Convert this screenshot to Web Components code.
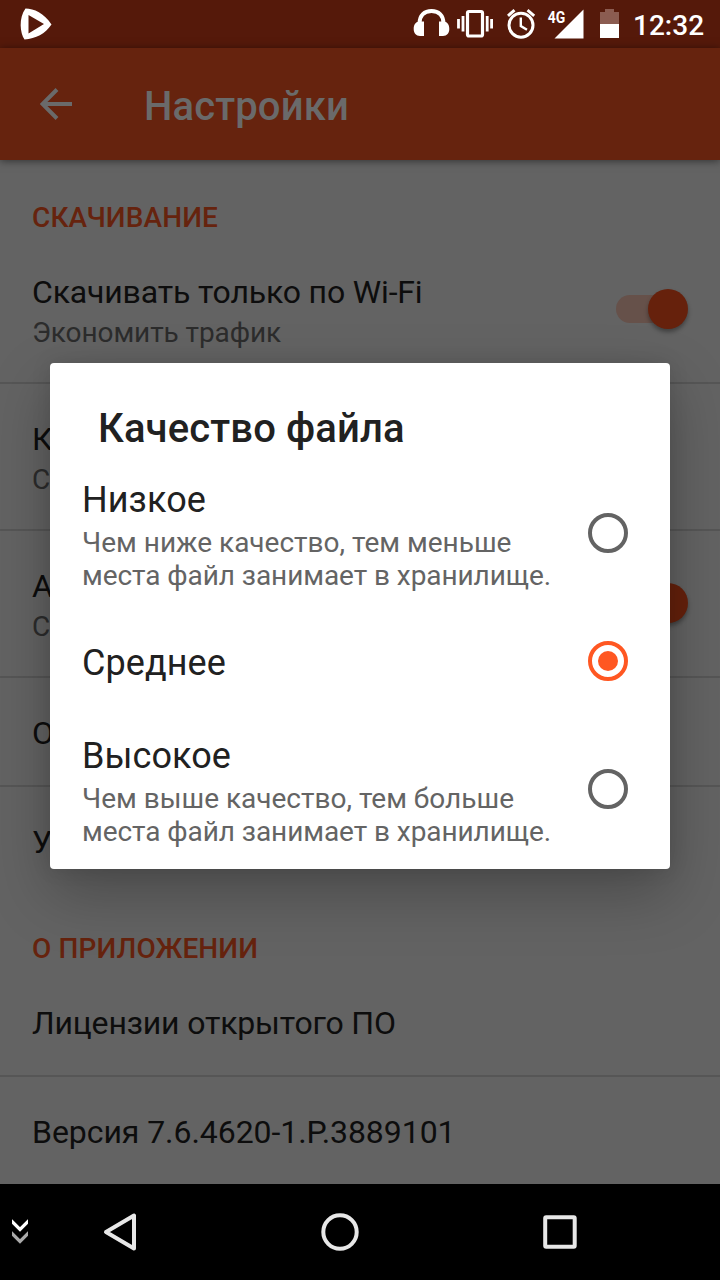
<!DOCTYPE html>
<html lang="ru">
<head>
<meta charset="utf-8">
<title>Настройки</title>
<style>
html,body{margin:0;padding:0}
body{width:720px;height:1280px;overflow:hidden;font-family:Roboto,"Noto Sans",sans-serif}
</style>
</head>
<body>
<settings-screen></settings-screen>
<script>
function define(name, html, setup) {
  const t = document.createElement('template');
  t.innerHTML = html;
  customElements.define(name, class extends HTMLElement {
    constructor() {
      super();
      this.attachShadow({mode: 'open'}).append(t.content.cloneNode(true));
    }
    connectedCallback() { if (setup) setup(this, this.shadowRoot); }
  });
}

define('status-bar', `
<style>
:host{display:block;height:48px;background:#55190a;color:#fff}
.bar{display:flex;height:48px;align-items:center;justify-content:space-between;padding-right:16px}
.right{display:flex;align-items:center}
.gap{width:13px}
svg{display:block}
.time{font-size:28px;font-weight:500;line-height:48px;width:71px;white-space:nowrap;margin-top:3px}
</style>
<div class="bar">
 <svg width="60" height="48"><path fill="#fff" fill-rule="evenodd" d="M25.500 8.500C34 8.500 44 13 51.500 24.500C45 34 36 38.500 24.500 39.500C20 33 18.500 18 25.500 8.500ZM28.500 15V33.500L44 24Z"/></svg>
 <div class="right">
 <svg width="220" height="48" viewBox="400 0 220 48">
  <g fill="none" stroke="#fff">
   <path stroke-width="4" d="M419.500 23.500C419.500 15 424.500 11 431.500 11C438.500 11 443.500 15 443.500 23.500"/>
   <rect x="467.500" y="11.500" width="15" height="24.500" rx="1.500" stroke-width="3.200"/>
   <path stroke-width="2.800" d="M458.500 19V28.500M463 16V31.500M487.200 16V31.500M491.600 19V28.500"/>
   <circle cx="521" cy="25.200" r="12" stroke-width="3"/>
   <path stroke-width="2.400" d="M520.800 17.500V26L527 29.800"/>
   <path stroke-width="3" d="M508 15.800L514.500 10.200M527.500 10.200L534.200 15.800"/>
  </g>
  <path fill="#fff" d="M424 21.500V36H420C416 36 413.700 33 413.700 29C413.700 24 416 21.500 420 21.500ZM439 21.500V36H443C447 36 449.300 33 449.300 29C449.300 24 447 21.500 443 21.500ZM583.500 9.500V38.500H554.500Z"/>
  <text x="547.800" y="23" font-family="Roboto,sans-serif" font-size="17" font-weight="700" fill="#fff" textLength="17.500" lengthAdjust="spacingAndGlyphs">4G</text>
  <path fill="#8b5c51" d="M600 12H605V9H614V12H619V24H600Z"/>
  <path fill="#fff" d="M600 24H619V38H600Z"/>
 </svg>
 <div class="gap"></div>
 <div class="time">12:32</div>
 </div>
</div>`);

define('app-header', `
<style>
:host{display:flex;align-items:center;box-sizing:border-box;height:112px;background:#66230e;color:#6a6a6a;padding-left:40px;box-shadow:0 1px 8px rgba(0,0,0,.5);position:relative;z-index:1}
svg{display:block;margin-right:72px}
.t{font-size:40px;font-weight:500;line-height:48px;padding-top:6px;letter-spacing:.13px}
</style>
<svg width="32" height="32" viewBox="0 0 32 32"><path d="M17 1.500L2.500 16L17 30.500M2.500 16H32" fill="none" stroke="#6a6a6a" stroke-width="4"/></svg>
<div class="t"><slot></slot></div>`);

define('section-title', `
<style>
:host{display:block;box-sizing:border-box;height:77px;padding:41px 32px 0;font-size:28px;line-height:33px;font-weight:500;color:#66230e;white-space:nowrap;letter-spacing:.1px}
</style><slot></slot>`);

define('toggle-switch', `
<style>
:host{display:block;width:72px;height:40px}
svg{display:block;overflow:visible}
circle{filter:drop-shadow(0 3px 2px rgba(0,0,0,.35))}
</style>
<svg width="72" height="40"><rect y="6" width="66" height="28" rx="14" fill="#66514a"/><circle cx="52" cy="20" r="20" fill="#66210c"/></svg>`);

define('setting-row', `
<style>
:host{display:flex;box-sizing:border-box;height:147px;padding:36px 32px 0;justify-content:space-between;border-bottom:2px solid #565656;white-space:nowrap}
:host([single]){height:109px}
:host([last]){border-bottom-color:transparent}
.main{font-size:32px;line-height:38px;color:#0d0d0d;letter-spacing:var(--tracking,-.16px)}
.sub{font-size:28px;line-height:33px;margin-top:5px;color:#2c2c2c;letter-spacing:-.08px}
.end{padding-top:16px}
</style>
<div><div class="main"><slot></slot></div><div class="sub"><slot name="sub"></slot></div></div>
<div class="end"><slot name="end"></slot></div>`);

define('radio-mark', `
<style>:host{display:block;width:40px;height:40px;flex:none}svg{display:block}
.dot{display:none}:host([on]) .dot{display:block}
:host{color:#636363}:host([on]){color:#ff5722}</style>
<svg width="40" height="40"><circle cx="20" cy="20" r="18" fill="none" stroke="currentColor" stroke-width="4"/><circle class="dot" cx="20" cy="20" r="10" fill="currentColor"/></svg>`);

define('radio-option', `
<style>
:host{display:flex;height:128px;align-items:center;justify-content:space-between;padding:0 42px 0 32px;white-space:nowrap}
.name{font-size:36px;line-height:42px;color:#212121;letter-spacing:.08px}
.desc{font-size:28px;line-height:33px;color:#646464}
.text{padding-top:4px}
.desc ::slotted(*){display:block;padding-top:5px;margin-bottom:-1px}
</style>
<div class="text"><div class="name"><slot></slot></div><div class="desc"><slot name="desc"></slot></div></div>
<radio-mark></radio-mark>`, (el, root) => {
  root.querySelector('radio-mark').toggleAttribute('on', el.hasAttribute('checked'));
});

define('choice-dialog', `
<style>
:host{display:block;position:absolute;left:50px;top:363px;width:620px;height:506px;box-sizing:border-box;background:#fff;border-radius:4px;box-shadow:0 24px 60px rgba(0,0,0,.26),0 0 20px rgba(0,0,0,.1);z-index:3}
.title{height:106px;box-sizing:border-box;padding:42px 48px 0;font-size:40px;line-height:47px;font-weight:500;color:#212121;letter-spacing:.13px}
</style>
<div class="title"><slot name="title"></slot></div><slot></slot>`);

define('nav-bar', `
<style>
:host{display:block;height:96px;background:#000;position:relative;z-index:4}
.bar{display:flex;align-items:center;height:96px;padding-left:12px}
svg{display:block}
</style>
<div class="bar">
<svg width="16" height="96" viewBox="12 0 16 96"><g fill="none" stroke-width="3.200"><path d="M11 36.500L20 45.500L29 36.500" stroke="#fff"/><path d="M11 48.500L20 57.500L29 48.500" stroke="#aaa"/></g></svg>
<svg width="292" height="96" viewBox="28 0 292 96"><path d="M134 31.500V64.500L106 48Z" fill="none" stroke="#e8e8e8" stroke-width="4" stroke-linejoin="round"/></svg>
<svg width="220" height="96" viewBox="320 0 220 96"><circle cx="340" cy="48" r="16.700" fill="none" stroke="#e8e8e8" stroke-width="4"/></svg>
<svg width="40" height="96" viewBox="540 0 40 96"><rect x="545.200" y="33.200" width="29.500" height="29.500" rx="1" fill="none" stroke="#e8e8e8" stroke-width="4"/></svg>
</div>`);

define('settings-screen', `
<style>
:host{display:block;position:relative;width:720px;height:1280px;overflow:hidden;background:#636363}
main{height:1024px;overflow:hidden}
.tail{height:104px}
.version{--tracking:-.06px}
.tight{letter-spacing:-.07px}
</style>
<status-bar></status-bar>
<app-header>Настройки</app-header>
<main>
 <section-title>СКАЧИВАНИЕ</section-title>
 <setting-row>Скачивать только по Wi-Fi<span slot="sub">Экономить трафик</span><toggle-switch slot="end"></toggle-switch></setting-row>
 <setting-row>К<span slot="sub">С</span></setting-row>
 <setting-row>А<span slot="sub">С</span><toggle-switch slot="end"></toggle-switch></setting-row>
 <setting-row single>О</setting-row>
 <setting-row single last class="tail">У</setting-row>
 <section-title>О ПРИЛОЖЕНИИ</section-title>
 <setting-row single>Лицензии открытого ПО</setting-row>
 <setting-row single last class="version">Версия 7.6.4620-1.P.3889101</setting-row>
</main>
<nav-bar></nav-bar>
<choice-dialog>
 <span slot="title">Качество файла</span>
 <radio-option>Низкое<span slot="desc">Чем ниже качество, тем меньше<br><span class="tight">места файл занимает в хранилище.</span></span></radio-option>
 <radio-option checked>Среднее</radio-option>
 <radio-option>Высокое<span slot="desc">Чем выше качество, тем больше<br><span class="tight">места файл занимает в хранилище.</span></span></radio-option>
</choice-dialog>`);
</script>
</body>
</html>
